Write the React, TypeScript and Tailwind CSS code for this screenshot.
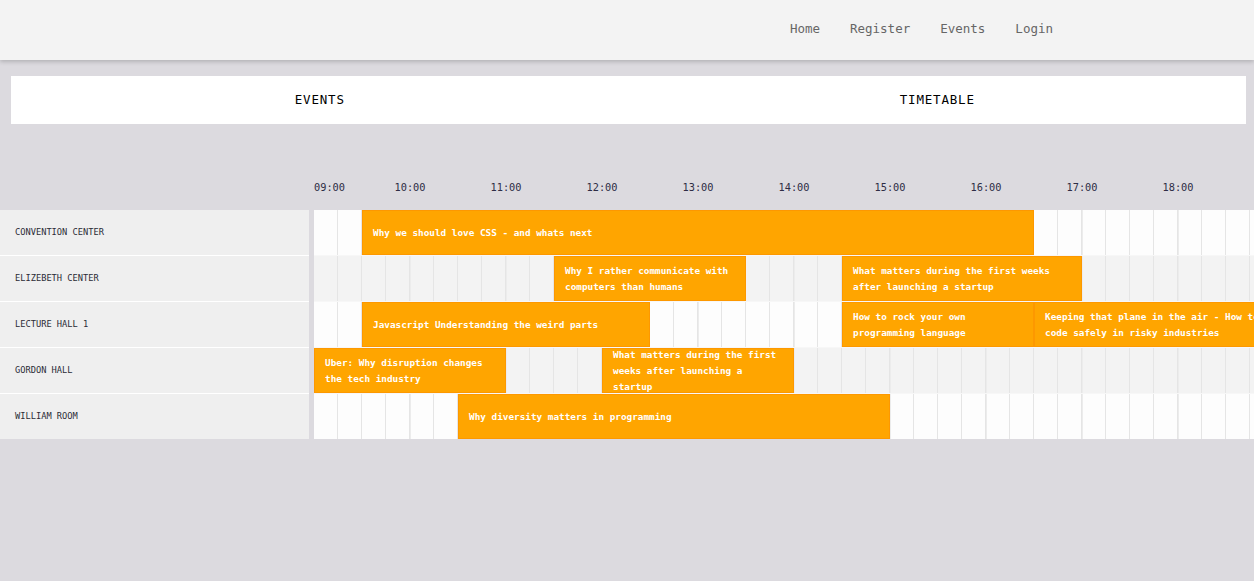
import React from "react";

const navLinks = ["Home", "Register", "Events", "Login"];

const hours = ["10:00", "11:00", "12:00", "13:00", "14:00", "15:00", "16:00", "17:00", "18:00"];

// start/end in hours from 09:00
const rooms = [
  {
    name: "CONVENTION CENTER",
    events: [{ title: "Why we should love CSS - and whats next", start: 9.5, end: 16.5 }],
  },
  {
    name: "ELIZEBETH CENTER",
    events: [
      { title: "Why I rather communicate with computers than humans", start: 11.5, end: 13.5 },
      { title: "What matters during the first weeks after launching a startup", start: 14.5, end: 17 },
    ],
  },
  {
    name: "LECTURE HALL 1",
    events: [
      { title: "Javascript Understanding the weird parts", start: 9.5, end: 12.5 },
      { title: "How to rock your own programming language", start: 14.5, end: 16.5 },
      { title: "Keeping that plane in the air - How to code safely in risky industries", start: 16.5, end: 19 },
    ],
  },
  {
    name: "GORDON HALL",
    events: [
      { title: "Uber: Why disruption changes the tech industry", start: 9, end: 11 },
      { title: "What matters during the first weeks after launching a startup", start: 12, end: 14 },
    ],
  },
  {
    name: "WILLIAM ROOM",
    events: [{ title: "Why diversity matters in programming", start: 10.5, end: 15 }],
  },
];

const SLOTS = 40;
const col = (t: number) => Math.round((t - 9) * 4) + 1;

export default function App() {
  return (
    <div className="w-full h-[581px] overflow-hidden bg-[#dcdadf] font-['DejaVu_Sans_Mono',monospace]">
      {/* Header */}
      <header className="relative z-10 h-[60px] bg-[#f3f3f3] shadow-[0_2px_4px_rgba(0,0,0,0.18)] flex items-center justify-end pr-[201px]">
        <nav className="flex gap-[30px] text-[12.5px] text-[#666] pb-[2px]">
          {navLinks.map((l) => (
            <a key={l} href="#" className="leading-none">
              {l}
            </a>
          ))}
        </nav>
      </header>

      {/* Tabs */}
      <div className="mt-[16px] ml-[11px] mr-[8px] h-[48px] bg-white grid grid-cols-2 text-[12.5px] tracking-[0.8px] text-black">
        <div className="flex items-center justify-center">EVENTS</div>
        <div className="flex items-center justify-center">TIMETABLE</div>
      </div>

      {/* Time axis */}
      <div className="mt-[54px] h-[20px] mb-[12px] flex items-center text-[10.3px] text-[#2e2d45] whitespace-nowrap">
        <div className="w-[314px] shrink-0" />
        <div className="w-[48px] shrink-0">09:00</div>
        {hours.map((h) => (
          <div key={h} className="w-[96px] shrink-0 text-center">
            {h}
          </div>
        ))}
      </div>

      {/* Schedule */}
      <div className="flex">
        <div className="w-[309px] shrink-0 bg-[#efefef]">
          {rooms.map((r, i) => (
            <div
              key={r.name}
              className={`h-[45px] flex items-center pl-[15px] text-[8.7px] text-[#2b2b36] ${
                i < rooms.length - 1 ? "box-content border-b border-white" : ""
              }`}
            >
              {r.name}
            </div>
          ))}
        </div>
        <div className="w-[5px] shrink-0" />
        <div className="flex-1 overflow-hidden">
          {rooms.map((r, i) => (
            <div
              key={r.name}
              className={`grid grid-cols-[repeat(40,24px)] grid-rows-[45px] w-[960px] ${
                i % 2 === 0 ? "bg-[#fdfdfd]" : "bg-[#f3f3f3]"
              } ${i < rooms.length - 1 ? "box-content border-b border-[#f7f7f7]" : ""}`}
            >
              {Array.from({ length: SLOTS }).map((_, s) => (
                <div
                  key={s}
                  className={`border-r border-[#e5e5e5] ${s % 4 === 0 && s > 0 ? "border-l border-l-[#ececec]" : ""}`}
                  style={{ gridColumn: `${s + 1} / ${s + 2}`, gridRow: 1 }}
                />
              ))}
              {r.events.map((e) => (
                <div
                  key={e.title}
                  className="bg-[#ffa500] border border-[#fd9800] flex items-center px-[10px] pt-[1px] text-white text-[9.35px] leading-[16px] font-bold whitespace-normal"
                  style={{ gridColumn: `${col(e.start)} / ${col(e.end)}`, gridRow: 1 }}
                >
                  <span>{e.title}</span>
                </div>
              ))}
            </div>
          ))}
        </div>
      </div>
    </div>
  );
}
